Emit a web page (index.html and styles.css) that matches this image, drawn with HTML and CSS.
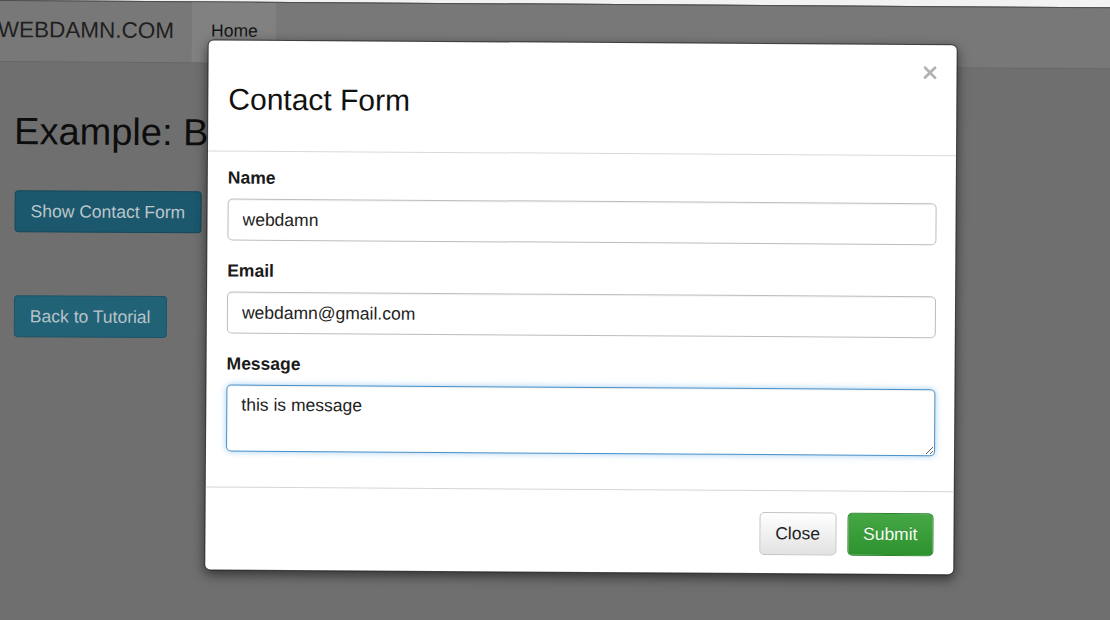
FILE: index.html
```html
<!DOCTYPE html>
<html lang="en">
<head>
<meta charset="utf-8">
<title>Example: Bootstrap Contact Form in Modal</title>
<link rel="stylesheet" href="styles.css">
</head>
<body>
<div class="screen">
  <nav class="navbar">
    <a class="brand" href="#">WEBDAMN.COM</a>
    <ul class="nav">
      <li class="nav-item active"><a href="#">Home</a></li>
    </ul>
  </nav>
  <main class="content">
    <h1 class="page-title">Example: Bootstrap Contact Form in Modal</h1>
    <div class="actions">
      <button class="btn-page btn-show" type="button">Show Contact Form</button>
      <a class="btn-page btn-back" href="#">Back to Tutorial</a>
    </div>
  </main>

  <div class="modal" role="dialog">
    <div class="modal-header">
      <h3 class="modal-title">Contact Form</h3>
      <button class="modal-close" type="button" aria-label="Close">
        <svg width="13" height="13" viewBox="0 0 13 13"><path d="M1.5 1.5 L11.5 11.5 M11.5 1.5 L1.5 11.5" stroke="#b3b3b3" stroke-width="2.8" stroke-linecap="square" fill="none"/></svg>
      </button>
    </div>
    <form class="modal-body">
      <div class="form-group">
        <label class="form-label" for="name">Name</label>
        <input class="form-control" id="name" type="text" value="webdamn">
      </div>
      <div class="form-group">
        <label class="form-label" for="email">Email</label>
        <input class="form-control" id="email" type="email" value="webdamn@gmail.com">
      </div>
      <div class="form-group">
        <label class="form-label" for="message">Message</label>
        <textarea class="form-control form-area is-focused" id="message">this is message</textarea>
      </div>
    </form>
    <div class="modal-footer">
      <button class="btn btn-default" type="button">Close</button>
      <button class="btn btn-success" type="button">Submit</button>
    </div>
  </div>
</div>
</body>
</html>
```

FILE: styles.css
```css
html {
  background: #f2f2f2;
}
body {
  margin: 0;
  overflow: hidden;
  font-family: "Liberation Sans", Arial, sans-serif;
}
.screen {
  position: relative;
  width: 1140px;
  height: 650px;
  background: #6f6f6f;
  transform: rotate(0.38deg);
  transform-origin: 0 0;
}

/* navbar */
.navbar {
  display: flex;
  align-items: stretch;
  height: 60px;
  background: #787878;
  border-top: 1px solid #4e4e4e;
  border-bottom: 1px solid #666666;
}
.brand {
  margin-left: -2px;
  padding-right: 18px;
  font-size: 22.5px;
  line-height: 58px;
  color: #1f1f1f;
  text-decoration: none;
}
.nav {
  display: flex;
  margin: 0;
  padding: 0;
  list-style: none;
}
.nav-item a {
  display: block;
  padding: 0 18px 3px 19px;
  font-size: 17.5px;
  line-height: 57px;
  color: #141414;
  text-decoration: none;
}
.nav-item.active {
  background: #818181;
}

/* page content */
.content {
  padding: 0 16px;
}
.page-title {
  margin: 46px 0 0 -1px;
  font-size: 38px;
  line-height: 46px;
  font-weight: normal;
  color: #0d0d0d;
}
.actions {
  display: flex;
  flex-direction: column;
  align-items: flex-start;
  gap: 63px;
  margin-top: 36px;
}
.btn-page {
  display: block;
  box-sizing: border-box;
  height: 42px;
  padding: 0 15px;
  font-family: inherit;
  font-size: 17.5px;
  line-height: 40px;
  border-radius: 4px;
  text-decoration: none;
  cursor: pointer;
}
.btn-show {
  background: #1b586d;
  border: 1px solid #154859;
  color: #bcc6ca;
}
.btn-back {
  background: #226277;
  border: 1px solid #1b5467;
  color: #b7c3c8;
}

/* modal */
.modal {
  position: absolute;
  left: 208px;
  top: 38px;
  width: 750px;
  box-sizing: border-box;
  background: #ffffff;
  border: 1px solid rgba(0, 0, 0, 0.75);
  border-radius: 6px;
  box-shadow: 0 4px 12px rgba(0, 0, 0, 0.55);
}
.modal-header {
  display: flex;
  justify-content: space-between;
  align-items: flex-start;
  padding: 21px 20px 35px 20px;
  border-bottom: 1px solid #d9d9d9;
}
.modal-title {
  margin: 21px 0 0 0;
  font-size: 30px;
  line-height: 33px;
  font-weight: normal;
  color: #111111;
}
.modal-close {
  display: block;
  margin: 0;
  padding: 0;
  width: 13px;
  height: 13px;
  border: 0;
  background: none;
  cursor: pointer;
}
.modal-close svg {
  display: block;
}
.modal-body {
  margin: 0;
  padding: 14px 19px 35px 20px;
}
.form-group {
  margin-bottom: 18px;
}
.form-group:last-child {
  margin-bottom: 0;
}
.form-label {
  display: block;
  margin-bottom: 8px;
  font-size: 17.5px;
  line-height: 25px;
  font-weight: bold;
  color: #1a1a1a;
}
.form-control {
  display: block;
  box-sizing: border-box;
  width: 100%;
  height: 42px;
  margin: 0;
  padding: 0 14px;
  font-family: inherit;
  font-size: 17.5px;
  color: #222222;
  background: #ffffff;
  border: 1px solid #bdbdbd;
  border-radius: 5px;
  box-shadow: inset 0 1px 1px rgba(0, 0, 0, 0.06);
  outline: none;
}
.form-area {
  height: 67px;
  padding: 7px 14px 5px;
  line-height: 25px;
  resize: vertical;
}
.form-area.is-focused {
  border-color: #4b90c6;
  box-shadow: inset 0 1px 1px rgba(0, 0, 0, 0.06), 0 0 6px rgba(102, 175, 233, 0.6);
}
.modal-footer {
  display: flex;
  justify-content: flex-end;
  gap: 11px;
  padding: 21px 20px 18px;
  border-top: 1px solid #d6d6d6;
}
.btn {
  box-sizing: border-box;
  height: 43px;
  padding: 0 15px;
  font-family: inherit;
  font-size: 17.5px;
  line-height: 41px;
  border-radius: 5px;
  cursor: pointer;
}
.btn-default {
  color: #222222;
  background: linear-gradient(#ffffff, #e2e2e2);
  border: 1px solid #c4c4c4;
}
.btn-success {
  color: #f4fff4;
  text-shadow: 0 -1px 0 rgba(0, 0, 0, 0.25);
  background: linear-gradient(#45a845, #2e922e);
  border: 1px solid #2b842b;
}
```
